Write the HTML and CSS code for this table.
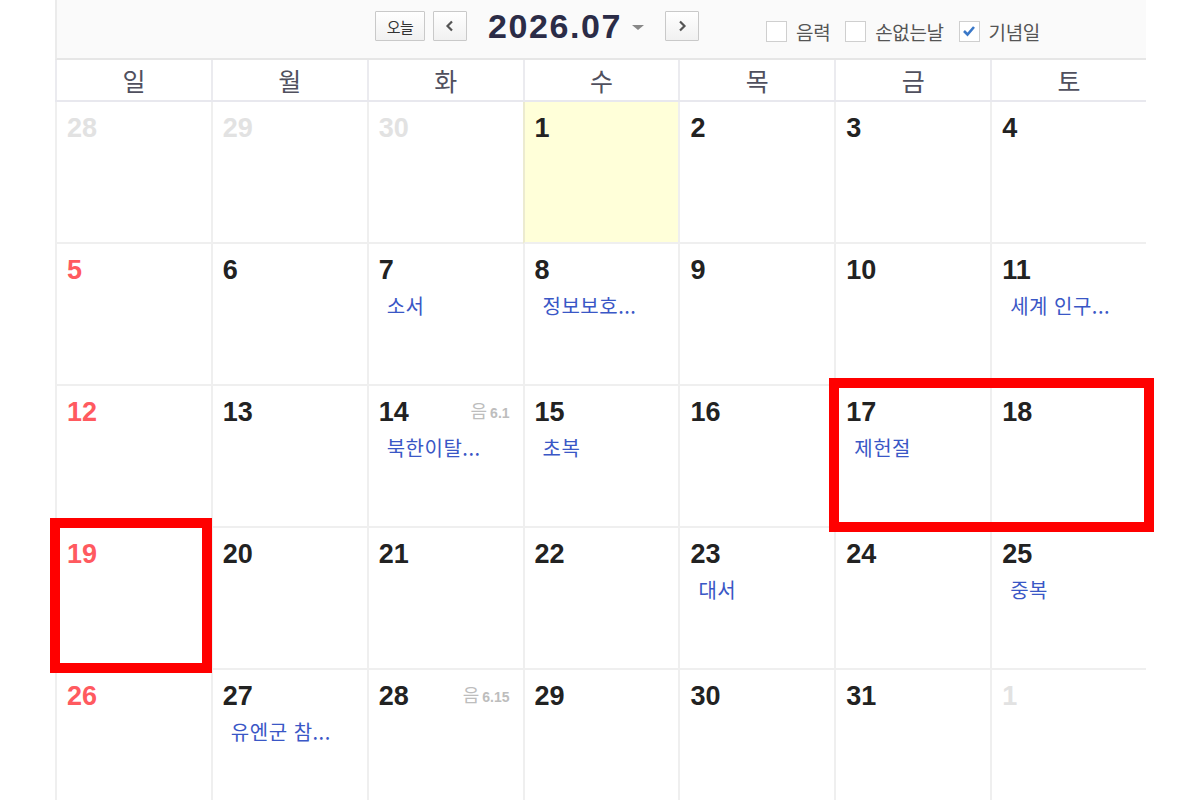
FILE: index.html
```html
<!DOCTYPE html>
<html lang="ko">
<head>
<meta charset="utf-8">
<link rel="stylesheet" href="styles.css">
</head>
<body>
<div class="cal">
  <div class="top">
    <button class="btn today">오늘</button>
    <button class="btn nav"><svg width="10" height="12" viewBox="0 0 10 12"><path d="M7 1.5 L2.5 6 L7 10.5" fill="none" stroke="#555" stroke-width="2.2"/></svg></button>
    <div class="title">2026.07</div>
    <span class="caret"></span>
    <button class="btn nav"><svg width="10" height="12" viewBox="0 0 10 12"><path d="M3 1.5 L7.5 6 L3 10.5" fill="none" stroke="#555" stroke-width="2.2"/></svg></button>
    <div class="opts">
      <label class="opt"><span class="box"></span>음력</label>
      <label class="opt"><span class="box"></span>손없는날</label>
      <label class="opt"><span class="box"><svg width="14" height="12" viewBox="0 0 14 12"><path d="M2 6 L5.5 9.5 L12 2" fill="none" stroke="#3a78c8" stroke-width="2.6"/></svg></span>기념일</label>
    </div>
  </div>
  <div class="dow">
    <div>일</div><div>월</div><div>화</div><div>수</div><div>목</div><div>금</div><div>토</div>
  </div>
  <div class="grid">
    <div class="cell"><div class="num other">28</div></div>
    <div class="cell"><div class="num other">29</div></div>
    <div class="cell"><div class="num other">30</div></div>
    <div class="cell now"><div class="num">1</div></div>
    <div class="cell"><div class="num">2</div></div>
    <div class="cell"><div class="num">3</div></div>
    <div class="cell"><div class="num">4</div></div>

    <div class="cell"><div class="num sun">5</div></div>
    <div class="cell"><div class="num">6</div></div>
    <div class="cell"><div class="num">7</div><div class="ev">소서</div></div>
    <div class="cell"><div class="num">8</div><div class="ev">정보보호...</div></div>
    <div class="cell"><div class="num">9</div></div>
    <div class="cell"><div class="num">10</div></div>
    <div class="cell"><div class="num">11</div><div class="ev">세계 인구...</div></div>

    <div class="cell"><div class="num sun">12</div></div>
    <div class="cell"><div class="num">13</div></div>
    <div class="cell"><div class="head"><div class="num">14</div><div class="lunar"><span class="lk">음</span>6.1</div></div><div class="ev">북한이탈...</div></div>
    <div class="cell"><div class="num">15</div><div class="ev">초복</div></div>
    <div class="cell"><div class="num">16</div></div>
    <div class="cell"><div class="num">17</div><div class="ev">제헌절</div></div>
    <div class="cell"><div class="num">18</div></div>

    <div class="cell"><div class="num sun">19</div></div>
    <div class="cell"><div class="num">20</div></div>
    <div class="cell"><div class="num">21</div></div>
    <div class="cell"><div class="num">22</div></div>
    <div class="cell"><div class="num">23</div><div class="ev">대서</div></div>
    <div class="cell"><div class="num">24</div></div>
    <div class="cell"><div class="num">25</div><div class="ev">중복</div></div>

    <div class="cell"><div class="num sun">26</div></div>
    <div class="cell"><div class="num">27</div><div class="ev">유엔군 참...</div></div>
    <div class="cell"><div class="head"><div class="num">28</div><div class="lunar"><span class="lk">음</span>6.15</div></div></div>
    <div class="cell"><div class="num">29</div></div>
    <div class="cell"><div class="num">30</div></div>
    <div class="cell"><div class="num">31</div></div>
    <div class="cell"><div class="num other">1</div></div>
  </div>
</div>
<div class="mark m1"></div>
<div class="mark m2"></div>
</body>
</html>
```
FILE: styles.css
```css
* { box-sizing: border-box; }
html, body { margin: 0; padding: 0; background: #fff; }
body {
  width: 1200px; height: 800px; overflow: hidden; position: relative;
  font-family: "Noto Sans CJK KR", "Noto Sans", sans-serif;
}
.cal { margin-left: 55px; width: 1091px; }
.top {
  height: 60px; background: #fafafa;
  border-left: 2px solid #ebebeb; border-bottom: 2px solid #e6e6e6;
  display: flex; align-items: center; padding-left: 318px; padding-bottom: 6px;
}
.btn {
  height: 30px; border: 1px solid #c9c9c9; border-radius: 1px;
  background: linear-gradient(#ffffff, #f1f1f1);
  padding: 0; margin: 0; display: flex; align-items: center; justify-content: center;
  font-family: inherit;
}
.today { width: 50px; font-size: 15px; color: #333; letter-spacing: -0.5px; }
.nav { width: 34px; margin-left: 8px; }
.title {
  margin-left: 21px; font-family: "Liberation Sans", Arial, sans-serif;
  font-weight: 700; font-size: 34px; color: #2b2c47; letter-spacing: 1.6px; line-height: 1;
}
.caret {
  width: 0; height: 0; margin-left: 10px; margin-right: 13px; margin-top: 2px;
  border-left: 6px solid transparent; border-right: 6px solid transparent; border-top: 5px solid #888;
}
.opts { display: flex; margin-left: 67px; margin-top: 10px; gap: 15px; }
.opt { display: flex; align-items: center; font-size: 19px; color: #555; letter-spacing: -0.4px; }
.box {
  width: 21px; height: 21px; border: 1px solid #cfcfcf; background: #fff; margin-right: 9px;
  display: flex; align-items: center; justify-content: center;
}
.dow {
  display: grid; grid-template-columns: repeat(7, 1fr);
  height: 42px; border-bottom: 2px solid #e8e8ee;
}
.dow div {
  border-left: 2px solid #ebebef; text-align: center;
  font-size: 25px; line-height: 40px; color: #50505e;
}
.grid { display: grid; grid-template-columns: repeat(7, 1fr); grid-auto-rows: 142px; }
.cell {
  border-left: 2px solid #efefef; border-bottom: 2px solid #efefef;
  padding: 8px 13px 0 10px; min-width: 0;
}
.cell.now { background: #ffffd9; border-left-color: #ecebd0; }
.head { display: flex; justify-content: space-between; align-items: flex-start; }
.num {
  font-family: "Liberation Sans", Arial, sans-serif;
  font-weight: 700; font-size: 27px; line-height: 36px; color: #222;
}
.num.other { color: #e2e2e2; }
.num.sun { color: #ff5a5f; }
.lunar {
  font-family: "Liberation Sans", Arial, sans-serif;
  font-size: 14px; color: #bdbdbd; font-weight: 700; margin-top: 3px;
}
.lk { font-family: "Noto Sans CJK KR", sans-serif; font-weight: 400; font-size: 18px; margin-right: 3px; }
.ev {
  margin-top: 6px; padding-left: 8px;
  font-size: 20px; line-height: 24px; color: #3a57c6; letter-spacing: 0.5px;
  white-space: nowrap;
}
.mark { position: absolute; border: 10px solid #ff0000; }
.m1 { left: 829px; top: 378px; width: 325px; height: 154px; }
.m2 { left: 50px; top: 518px; width: 162px; height: 155px; }
```
